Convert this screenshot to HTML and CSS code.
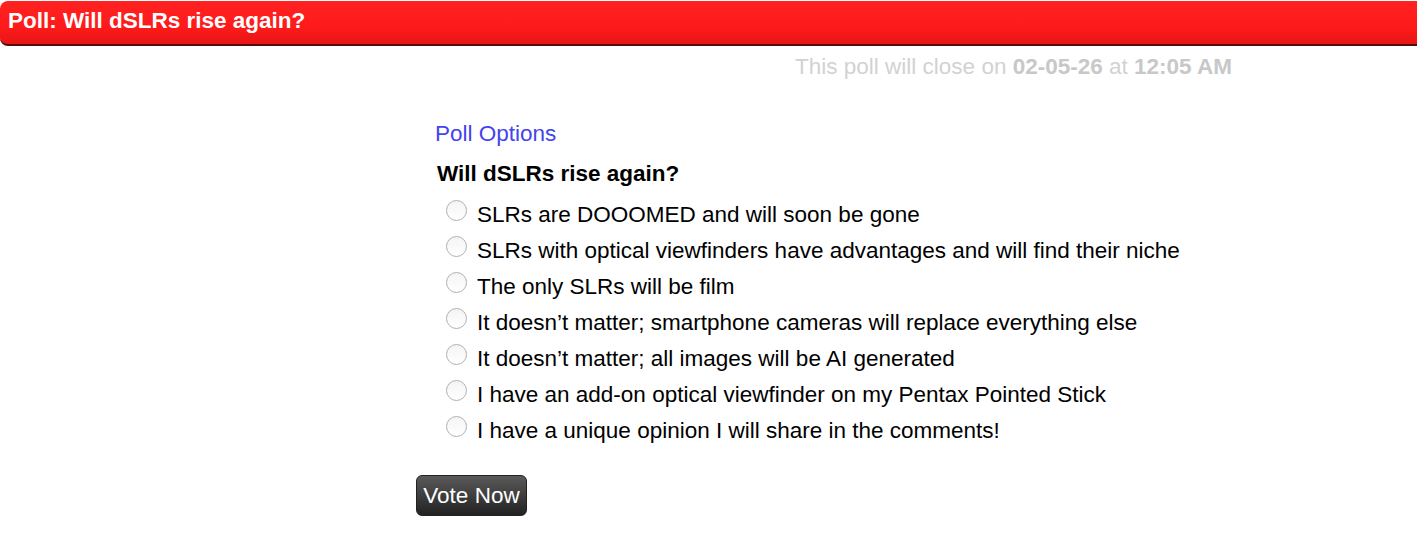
FILE: index.html
```html
<!DOCTYPE html>
<html>
<head>
<meta charset="utf-8">
<link rel="stylesheet" href="styles.css">
</head>
<body>
<div class="bar"><h1 class="bar-title">Poll: Will dSLRs rise again?</h1></div>
<p class="close">This poll will close on <b>02-05-26</b> at <b>12:05 AM</b></p>
<form class="poll">
  <div class="poll-label">Poll Options</div>
  <div class="question">Will dSLRs rise again?</div>
  <ul class="options">
    <li class="option"><span class="radio"></span><span>SLRs are DOOOMED and will soon be gone</span></li>
    <li class="option"><span class="radio"></span><span>SLRs with optical viewfinders have advantages and will find their niche</span></li>
    <li class="option"><span class="radio"></span><span>The only SLRs will be film</span></li>
    <li class="option"><span class="radio"></span><span>It doesn’t matter; smartphone cameras will replace everything else</span></li>
    <li class="option"><span class="radio"></span><span>It doesn’t matter; all images will be AI generated</span></li>
    <li class="option"><span class="radio"></span><span>I have an add-on optical viewfinder on my Pentax Pointed Stick</span></li>
    <li class="option"><span class="radio"></span><span>I have a unique opinion I will share in the comments!</span></li>
  </ul>
  <button type="button" class="vote">Vote Now</button>
</form>
</body>
</html>
```
FILE: styles.css
```css
html, body {
  margin: 0;
  padding: 0;
  background: #fff;
  font-family: "Liberation Sans", Arial, sans-serif;
}
.bar {
  margin-top: 1px;
  height: 43px;
  background: linear-gradient(#ff2222 0%, #ff1a1a 60%, #e61616 100%);
  border-radius: 8px 0 0 8px;
  border-bottom: 2px solid #5a0a0a;
  display: flex;
  align-items: center;
}
.bar-title {
  margin: 0 0 0 8px;
  color: #fff;
  font-size: 22.5px;
  font-weight: bold;
  position: relative;
  top: -2px;
}
.close {
  margin: 8px 0 0;
  padding-right: 185px;
  text-align: right;
  font-size: 22.5px;
  color: #d2d2d2;
}
.close b {
  color: #c8c8c8;
}
.poll {
  margin: 41px 0 0 416px;
}
.poll-label {
  margin-left: 19px;
  font-size: 22.5px;
  color: #4444ee;
  line-height: 26px;
}
.question {
  margin: 14px 0 0 21px;
  font-size: 22.5px;
  font-weight: bold;
  color: #000;
  line-height: 26px;
}
.options {
  list-style: none;
  margin: 15px 0 0 30px;
  padding: 0;
}
.option {
  display: flex;
  align-items: flex-start;
  gap: 10px;
  height: 36px;
  font-size: 22.5px;
  line-height: 26px;
  color: #000;
}
.radio {
  width: 19px;
  height: 19px;
  border: 1px solid #b0b0b0;
  border-radius: 50%;
  background: linear-gradient(#f4f4f4, #fff);
  margin-top: -2px;
  flex: none;
}
.vote {
  margin-top: 21px;
  width: 111px;
  height: 41px;
  border: 1px solid #222;
  border-radius: 6px;
  background: linear-gradient(#5a5a5a, #222);
  color: #fff;
  font-family: "Liberation Sans", Arial, sans-serif;
  font-size: 22.5px;
  padding: 0;
}
```
